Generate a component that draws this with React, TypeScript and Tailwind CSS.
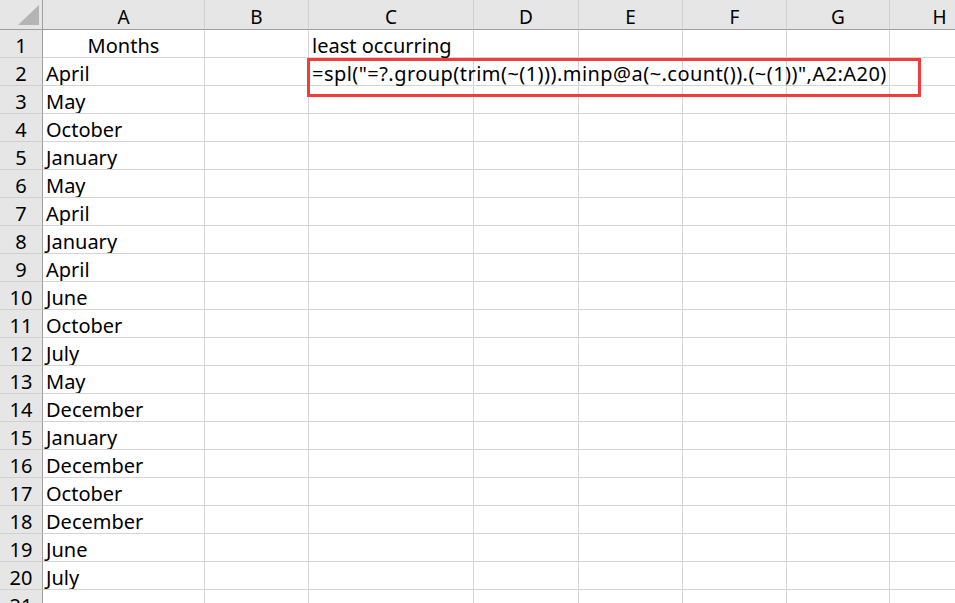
import React from 'react'

const months = [
  'April', 'May', 'October', 'January', 'May', 'April', 'January', 'April', 'June',
  'October', 'July', 'May', 'December', 'January', 'December', 'October', 'December',
  'June', 'July',
]

const cols = ['A', 'B', 'C', 'D', 'E', 'F', 'G', 'H']

const font = { fontFamily: '"Noto Sans", "Noto Sans CJK SC", sans-serif' }

const FORMULA = '=spl("=?.group(trim(~(1))).minp@a(~.count()).(~(1))",A2:A20)'

function cellText(row: number, col: number) {
  if (row === 1 && col === 0) return 'Months'
  if (row === 1 && col === 2) return 'least occurring'
  if (row === 2 && col === 2) return FORMULA
  if (col === 0 && row >= 2 && row <= 20) return months[row - 2]
  return ''
}

export default function App() {
  const rows = Array.from({ length: 21 }, (_, i) => i + 1)
  return (
    <div className="relative w-[955px] h-[603px] overflow-hidden bg-white text-black" style={font}>
      <div className="grid grid-cols-[43px_162px_104px_165px_105px_104px_104px_103px_100px] w-[990px]">
        {/* corner */}
        <div className="h-[30px] bg-[#e6e6e6] border-r border-b border-[#9e9e9e] flex items-end justify-end pr-[3px] pb-[4px]">
          <svg width="21" height="20" viewBox="0 0 21 20">
            <polygon points="21,0 21,20 0,20" fill="#b4b4b4" />
          </svg>
        </div>
        {cols.map((c) => (
          <div
            key={c}
            className="h-[30px] pt-[5px] bg-[#e6e6e6] border-r border-r-[#d0d0d0] border-b border-b-[#9e9e9e] flex items-center justify-center text-[19px] leading-none"
          >
            {c}
          </div>
        ))}

        {rows.map((r) => (
          <React.Fragment key={r}>
            <div className="h-[28px] pt-[4px] bg-[#e6e6e6] border-r border-r-[#9e9e9e] border-b border-b-[#d0d0d0] flex items-center justify-center text-[20px] leading-none">
              {r}
            </div>
            {cols.map((c, ci) => {
              const t = cellText(r, ci)
              return (
                <div
                  key={c}
                  className={`h-[28px] pt-[4px] border-r border-b border-[#d4d4d4] flex items-center text-[20px] leading-none whitespace-nowrap ${
                    r === 1 && ci === 0 ? 'justify-center' : 'pl-[3px]'
                  } ${ci === 2 ? 'overflow-visible relative z-10' : 'overflow-hidden'} ${
                    t === FORMULA ? 'tracking-[0.45px]' : ''
                  }`}
                >
                  {t}
                </div>
              )
            })}
          </React.Fragment>
        ))}
      </div>

      {/* highlight box around the formula */}
      <div className="absolute left-[307px] top-[58px] w-[614px] h-[39px] border-[3px] border-[#f23b3b] pointer-events-none z-20" />
    </div>
  )
}
